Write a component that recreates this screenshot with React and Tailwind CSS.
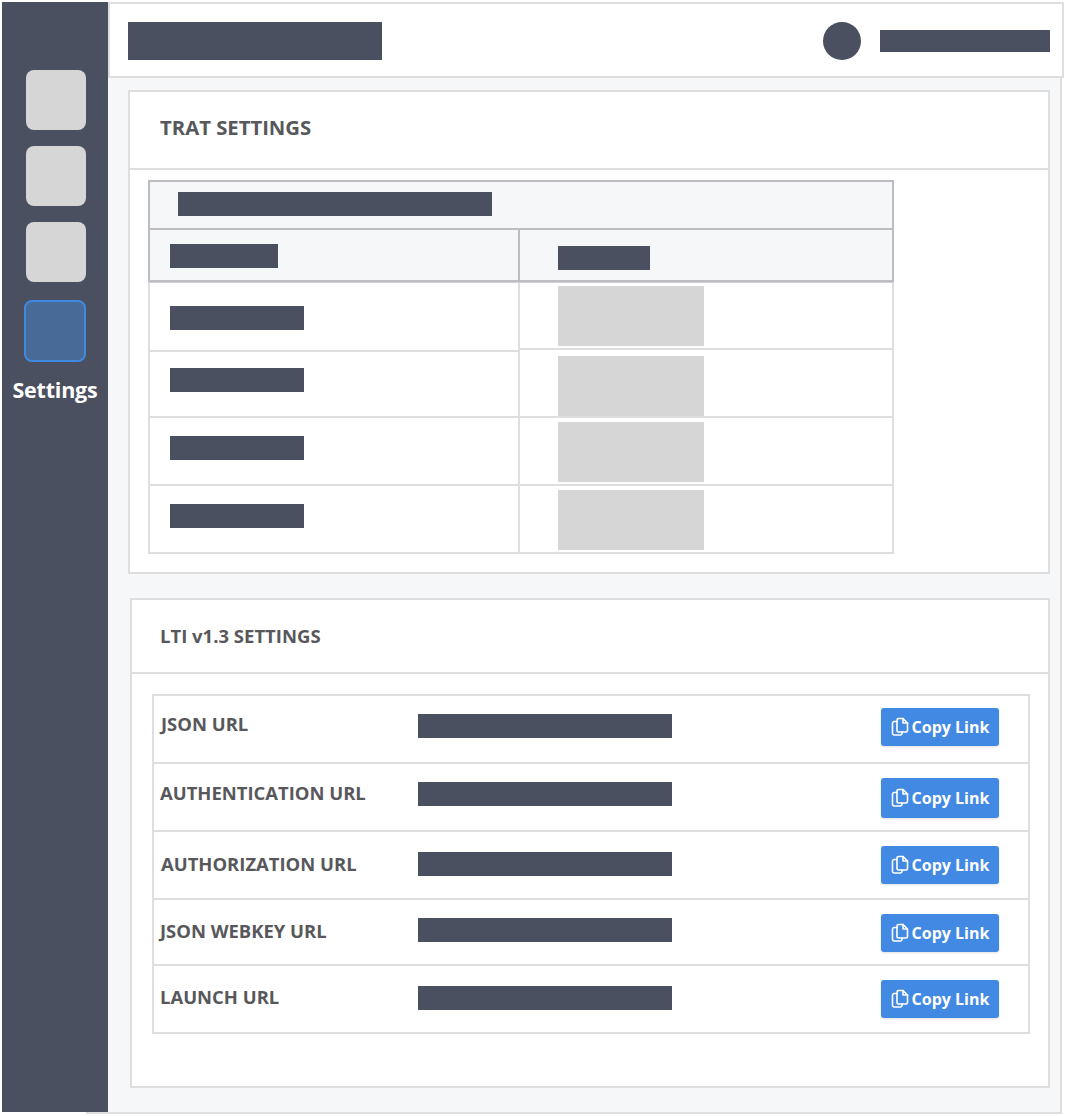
import React from "react";

const Bar = ({ className = "" }) => <div className={`bg-[#4a5060] ${className}`} />;

const CopyIcon = () => (
  <svg width="18" height="20" viewBox="0 0 18 20" fill="none" stroke="white" strokeWidth="1.6" strokeLinejoin="round" strokeLinecap="round" className="shrink-0">
    <path d="M6 4.5H3A1.6 1.6 0 0 0 1.5 6v10.5A1.6 1.6 0 0 0 3 18h6.5a1.6 1.6 0 0 0 1.5-1.5V15" />
    <path d="M6 3A1.5 1.5 0 0 1 7.5 1.5h4.5l4.5 4.5v7.5a1.5 1.5 0 0 1-1.5 1.5H7.5A1.5 1.5 0 0 1 6 13.5Z" />
    <path d="M12 1.5V6h4.5" />
  </svg>
);

const urls = [
  { label: "JSON URL", h: "h-[68px]", lp: "pl-[7px]", lpt: "pt-[16px]", bar: "mt-[18px]", btn: "mt-[12px] h-[38px]" },
  { label: "AUTHENTICATION URL", h: "h-[68px]", lp: "pl-[6px]", lpt: "pt-[17px]", bar: "mt-[18px]", btn: "mt-[14px] h-[40px]" },
  { label: "AUTHORIZATION URL", h: "h-[68px]", lp: "pl-[7px]", lpt: "pt-[20px]", bar: "mt-[20px]", btn: "mt-[14px] h-[38px]" },
  { label: "JSON WEBKEY URL", h: "h-[66px]", lp: "pl-[6px]", lpt: "pt-[19px]", bar: "mt-[18px]", btn: "mt-[14px] h-[38px]" },
  { label: "LAUNCH URL", h: "h-[66px]", lp: "pl-[6px]", lpt: "pt-[19px]", bar: "mt-[20px]", btn: "mt-[14px] h-[38px]" },
];

const leftRows = [
  { h: "h-[69px]", pad: "pt-[23px]" },
  { h: "h-[66px]", pad: "pt-[16px]" },
  { h: "h-[68px]", pad: "pt-[18px]" },
  { h: "h-[66px]", pad: "pt-[18px]" },
];
const rightRows = [
  { h: "h-[67px]", pad: "pt-[3px]" },
  { h: "h-[68px]", pad: "pt-[6px]" },
  { h: "h-[68px]", pad: "pt-[4px]" },
  { h: "h-[66px]", pad: "pt-[4px]" },
];

export default function App() {
  return (
    <div className="w-[1066px] h-[1116px] bg-white flex items-start overflow-hidden font-['Open_Sans',sans-serif]">
      <aside className="relative z-10 ml-[2px] mt-[2px] w-[106px] h-[1110px] bg-[#4a5060] flex flex-col items-center pt-[68px] shrink-0">
        <div className="w-[60px] h-[60px] ml-[2px] rounded-lg bg-[#d6d6d6]" />
        <div className="w-[60px] h-[60px] ml-[2px] rounded-lg bg-[#d6d6d6] mt-4" />
        <div className="w-[60px] h-[60px] ml-[2px] rounded-lg bg-[#d6d6d6] mt-4" />
        <div className="w-[62px] h-[62px] rounded-lg bg-[#486a96] border-2 border-[#4089e0] mt-[18px]" />
        <div className="text-white font-bold text-[21.5px] leading-7 mt-[14px] tracking-[-0.2px]">Settings</div>
      </aside>
      <main className="w-[956px] mt-[2px] shrink-0">
        <header className="h-[76px] bg-white border-2 border-[#dedede] flex items-center pt-[2px] pl-[18px] pr-[12px]">
          <Bar className="w-[254px] h-[38px]" />
          <div className="ml-auto w-[38px] h-[38px] rounded-full bg-[#4a5060]" />
          <Bar className="ml-[19px] w-[170px] h-[22px]" />
        </header>
        <div className="-ml-[22px] w-[976px] h-[1036px] bg-[#f6f7f9] border-r-2 border-b-2 border-[#dedede] pl-[42px] pt-[12px]">
          <section className="w-[922px] h-[484px] bg-white border-2 border-[#dedede]">
            <div className="h-[78px] border-b-2 border-[#dedede] pl-[30px] pt-[21px]">
              <h2 className="text-[20.3px] leading-7 font-bold text-[#58585c]">TRAT SETTINGS</h2>
            </div>
            <div className="ml-[18px] mt-[10px] w-[746px]">
              <div className="h-[50px] bg-[#f6f7f9] border-2 border-[#bdbdc1] pl-[28px] pt-[10px]">
                <Bar className="w-[314px] h-[24px]" />
              </div>
              <div className="flex h-[52px] bg-[#f6f7f9] border-x-2 border-b-2 border-[#bdbdc1]">
                <div className="w-[370px] border-r-2 border-[#bdbdc1] pl-[20px] pt-[14px]"><Bar className="w-[108px] h-[24px]" /></div>
                <div className="pl-[38px] pt-[16px]"><Bar className="w-[92px] h-[24px]" /></div>
              </div>
              <div className="flex border-x-2 border-b-2 border-t border-[#dedede] border-t-[#d0d0d4]">
                <div className="w-[370px] border-r-2 border-[#dedede]">
                  {leftRows.map((r, i) => (
                    <div key={i} className={`${r.h} ${r.pad} pl-[20px] ${i < 3 ? "border-b-2 border-[#dedede]" : ""}`}>
                      <Bar className="w-[134px] h-[24px]" />
                    </div>
                  ))}
                </div>
                <div className="flex-1">
                  {rightRows.map((r, i) => (
                    <div key={i} className={`${r.h} ${r.pad} pl-[38px] ${i < 3 ? "border-b-2 border-[#dedede]" : ""}`}>
                      <div className="w-[146px] h-[60px] bg-[#d6d6d6]" />
                    </div>
                  ))}
                </div>
              </div>
            </div>
          </section>
          <section className="ml-[2px] mt-[24px] w-[920px] h-[490px] bg-white border-2 border-[#dedede]">
            <div className="h-[74px] border-b-2 border-[#dedede] pl-[28px] pt-[24px]">
              <h2 className="text-[18.5px] leading-6 font-bold text-[#58585c]">LTI v1.3 SETTINGS</h2>
            </div>
            <div className="ml-[20px] mt-[20px] w-[878px] border-2 border-[#dedede]">
              {urls.map((u, i) => (
                <div key={u.label} className={`${u.h} flex ${i < 4 ? "border-b-2 border-[#dedede]" : ""}`}>
                  <div className={`w-[264px] ${u.lp} ${u.lpt} text-[18.45px] leading-6 font-bold text-[#58585c] whitespace-nowrap`}>{u.label}</div>
                  <Bar className={`w-[254px] h-[24px] ${u.bar}`} />
                  <button className={`ml-[209px] w-[118px] ${u.btn} rounded-[3px] bg-[#4289e4] text-white font-bold text-[16px] flex items-center justify-center gap-[3px] shadow-sm`}>
                    <CopyIcon />
                    <span>Copy Link</span>
                  </button>
                </div>
              ))}
            </div>
          </section>
        </div>
      </main>
    </div>
  );
}
